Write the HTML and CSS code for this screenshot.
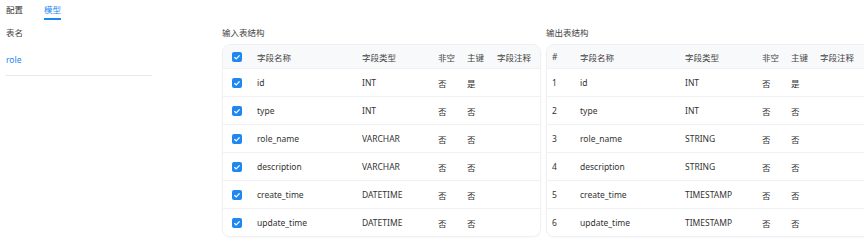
FILE: index.html
```html
<!DOCTYPE html>
<html lang="zh-CN">
<head>
    <meta charset="UTF-8">
    <title>模型</title>
    <link rel="stylesheet" href="styles.css">
</head>
<body>
    <div class="tabs">
        <span class="tab">配置</span>
        <span class="tab active">模型</span>
    </div>
    <div class="main">
        <div class="left">
            <div class="title">表名</div>
            <div class="table-name">role</div>
        </div>
        <div class="section in">
            <div class="title">输入表结构</div>
            <div class="card">
                <div class="row head">
                    <span class="cell"><svg class="check" viewBox="0 0 10 10"><rect width="10" height="10" rx="2"/><path d="M2.4 5.2 4.2 6.9 7.6 3.4"/></svg></span>
                    <span class="cell">字段名称</span>
                    <span class="cell">字段类型</span>
                    <span class="cell">非空</span>
                    <span class="cell">主键</span>
                    <span class="cell">字段注释</span>
                </div>
                <div class="row"><span class="cell"><svg class="check" viewBox="0 0 10 10"><rect width="10" height="10" rx="2"/><path d="M2.4 5.2 4.2 6.9 7.6 3.4"/></svg></span><span class="cell">id</span><span class="cell">INT</span><span class="cell">否</span><span class="cell">是</span><span class="cell"></span></div>
                <div class="row"><span class="cell"><svg class="check" viewBox="0 0 10 10"><rect width="10" height="10" rx="2"/><path d="M2.4 5.2 4.2 6.9 7.6 3.4"/></svg></span><span class="cell">type</span><span class="cell">INT</span><span class="cell">否</span><span class="cell">否</span><span class="cell"></span></div>
                <div class="row"><span class="cell"><svg class="check" viewBox="0 0 10 10"><rect width="10" height="10" rx="2"/><path d="M2.4 5.2 4.2 6.9 7.6 3.4"/></svg></span><span class="cell">role_name</span><span class="cell">VARCHAR</span><span class="cell">否</span><span class="cell">否</span><span class="cell"></span></div>
                <div class="row"><span class="cell"><svg class="check" viewBox="0 0 10 10"><rect width="10" height="10" rx="2"/><path d="M2.4 5.2 4.2 6.9 7.6 3.4"/></svg></span><span class="cell">description</span><span class="cell">VARCHAR</span><span class="cell">否</span><span class="cell">否</span><span class="cell"></span></div>
                <div class="row"><span class="cell"><svg class="check" viewBox="0 0 10 10"><rect width="10" height="10" rx="2"/><path d="M2.4 5.2 4.2 6.9 7.6 3.4"/></svg></span><span class="cell">create_time</span><span class="cell">DATETIME</span><span class="cell">否</span><span class="cell">否</span><span class="cell"></span></div>
                <div class="row"><span class="cell"><svg class="check" viewBox="0 0 10 10"><rect width="10" height="10" rx="2"/><path d="M2.4 5.2 4.2 6.9 7.6 3.4"/></svg></span><span class="cell">update_time</span><span class="cell">DATETIME</span><span class="cell">否</span><span class="cell">否</span><span class="cell"></span></div>
            </div>
        </div>
        <div class="section out">
            <div class="title">输出表结构</div>
            <div class="card">
                <div class="row head">
                    <span class="cell">#</span>
                    <span class="cell">字段名称</span>
                    <span class="cell">字段类型</span>
                    <span class="cell">非空</span>
                    <span class="cell">主键</span>
                    <span class="cell">字段注释</span>
                </div>
                <div class="row"><span class="cell">1</span><span class="cell">id</span><span class="cell">INT</span><span class="cell">否</span><span class="cell">是</span><span class="cell"></span></div>
                <div class="row"><span class="cell">2</span><span class="cell">type</span><span class="cell">INT</span><span class="cell">否</span><span class="cell">否</span><span class="cell"></span></div>
                <div class="row"><span class="cell">3</span><span class="cell">role_name</span><span class="cell">STRING</span><span class="cell">否</span><span class="cell">否</span><span class="cell"></span></div>
                <div class="row"><span class="cell">4</span><span class="cell">description</span><span class="cell">STRING</span><span class="cell">否</span><span class="cell">否</span><span class="cell"></span></div>
                <div class="row"><span class="cell">5</span><span class="cell">create_time</span><span class="cell">TIMESTAMP</span><span class="cell">否</span><span class="cell">否</span><span class="cell"></span></div>
                <div class="row"><span class="cell">6</span><span class="cell">update_time</span><span class="cell">TIMESTAMP</span><span class="cell">否</span><span class="cell">否</span><span class="cell"></span></div>
            </div>
        </div>
    </div>
</body>
</html>
```

FILE: styles.css
```css
body {
    margin: 0;
    background: #fff;
    color: #333;
    font-family: "Noto Sans", "Noto Sans CJK SC", sans-serif;
    font-size: 8.5px;
    overflow: hidden;
    width: 864px;
    height: 244px;
}

.tabs {
    display: flex;
    gap: 21px;
    padding-left: 6px;
}

.tab {
    padding-top: 1px;
    line-height: 17px;
    border-bottom: 2px solid transparent;
}

.tab.active {
    color: #1d86f0;
    border-bottom-color: #1d86f0;
}

.main {
    display: flex;
    padding-left: 6px;
}

.title {
    margin-top: 3px;
    line-height: 20px;
    color: #444;
}

.left {
    width: 146px;
    flex-shrink: 0;
}

.table-name {
    margin-top: 8px;
    line-height: 18px;
    padding-bottom: 6px;
    border-bottom: 1px solid #e8e8e8;
    color: #1d86f0;
}

.section {
    flex-shrink: 0;
}

.section.in {
    width: 319px;
    margin-left: 70px;
}

.section.out {
    width: 330px;
    margin-left: 5px;
}

.card {
    margin-top: 1px;
    border: 1px solid #eef0f3;
    border-radius: 8px;
    overflow: hidden;
    box-shadow: 0 1px 2px rgba(0, 0, 0, 0.03);
}

.row {
    display: grid;
    height: 28px;
    align-items: center;
    border-top: 1px solid #f0f1f3;
    box-sizing: border-box;
}

.row.head {
    height: 23px;
    border-top: none;
    background: #f8f9fa;
    color: #444;
}

.in .row {
    grid-template-columns: 25px 105px 76px 29px 30px 1fr;
    padding-left: 9px;
}

.out .row {
    grid-template-columns: 28px 105px 77px 29px 29px 1fr;
    padding-left: 5px;
}

.cell {
    white-space: nowrap;
}

.check {
    display: block;
    width: 10px;
    height: 10px;
}

.check rect {
    fill: #1e87f0;
}

.check path {
    fill: none;
    stroke: #fff;
    stroke-width: 1.3;
}
```
